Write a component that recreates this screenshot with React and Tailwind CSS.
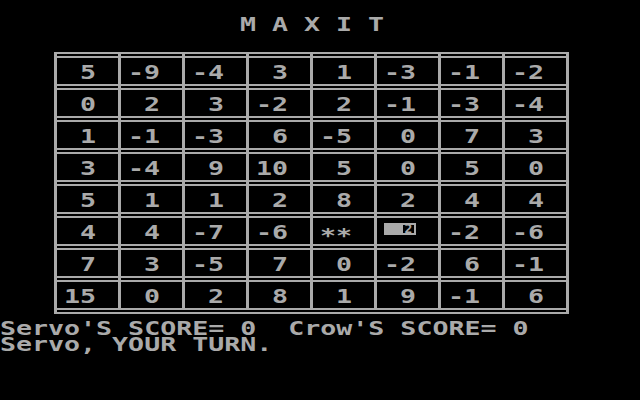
const GRAY = 'text-[#aaaaaa]';

const BOARD = [
  [5, -9, -4, 3, 1, -3, -1, -2],
  [0, 2, 3, -2, 2, -1, -3, -4],
  [1, -1, -3, 6, -5, 0, 7, 3],
  [3, -4, 9, 10, 5, 0, 5, 0],
  [5, 1, 1, 2, 8, 2, 4, 4],
  [4, 4, -7, -6, '**', 'cursor', -2, -6],
  [7, 3, -5, 7, 0, -2, 6, -1],
  [15, 0, 2, 8, 1, 9, -1, 6],
];

// 8x8 DOS glyphs doubled: a mono face stretched to a 16px cell
function Txt({ children }) {
  return (
    <span className="inline-block origin-left scale-x-[1.4] whitespace-pre text-[19px] font-bold">
      {children}
    </span>
  );
}

function Line({ children, className = '' }) {
  return (
    <div className={`h-4 leading-4 ${className}`}>
      <Txt>{children}</Txt>
    </div>
  );
}

function CellValue({ value }) {
  if (value === 'cursor') {
    return (
      <div className="flex">
        <div className="mt-[-1px] h-[12px] w-[17px] bg-[#aaaaaa]" />
        <div className="mt-[-1px] flex h-[12px] w-[15px] items-center justify-center border-2 border-[#aaaaaa] bg-black text-[13px] leading-3 font-bold">
          2
        </div>
      </div>
    );
  }
  if (value === '**') {
    return (
      <div className="h-4 pt-[3px] leading-4">
        <Txt>**</Txt>
      </div>
    );
  }
  return (
    <div className="h-4 leading-4">
      <Txt>{String(value).padStart(2, ' ')}</Txt>
    </div>
  );
}

function Board() {
  return (
    <div className="ml-[54px] mt-[20px] w-[515px] border-x-[3px] border-[#aaaaaa]">
      {BOARD.map((row, r) => (
        <div key={r} className="border-t-2 border-[#aaaaaa]">
          <div className="flex h-[30px]">
            {row.map((v, c) => (
              <div
                key={c}
                className={c === 0 ? 'w-[61px]' : 'w-16 border-l-[3px] border-[#aaaaaa]'}
              >
                <div className="mt-[2px] h-[2px] bg-[#aaaaaa]" />
                <div className="mt-[6px] pl-[7px]">
                  <CellValue value={v} />
                </div>
              </div>
            ))}
          </div>
        </div>
      ))}
      <div className="border-t-2 border-[#aaaaaa]">
        <div className="mt-[2px] h-[2px] bg-[#aaaaaa]" />
      </div>
    </div>
  );
}

export default function App() {
  return (
    <div
      className={`h-[400px] w-[640px] overflow-hidden bg-black pt-4 ${GRAY} font-['DejaVu_Sans_Mono','Liberation_Mono',monospace]`}
    >
      <Line className="pl-[240px]">M A X I T</Line>
      <Board />
      <div className="mt-[6px]">
        <Line>Servo'S SCORE= 0  Crow'S SCORE= 0</Line>
        <Line>Servo, YOUR TURN.</Line>
      </div>
    </div>
  );
}
